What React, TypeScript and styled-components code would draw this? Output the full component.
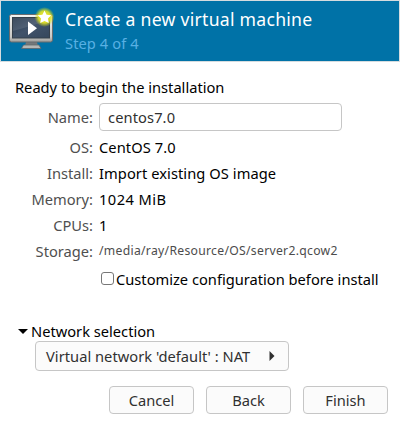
import React from "react";
import styled, { createGlobalStyle } from "styled-components";

const GlobalStyle = createGlobalStyle`
  * { box-sizing: border-box; }
  body { margin: 0; background: #fff; }
`;

const Dialog = styled.main`
  display: flex;
  flex-direction: column;
  width: 400px;
  height: 426px;
  overflow: hidden;
  background: #fff;
  color: #000;
  font: 14.667px/20px "Noto Sans", sans-serif;
  white-space: nowrap;
`;

const Header = styled.header`
  display: flex;
  height: 62px;
  padding: 6px 0 0 7px;
  gap: 9px;
  border: 1px solid #d5dcdf;
  background: #0072a7;
  flex: none;
`;

const Title = styled.h1`
  margin: 0;
  color: #fff;
  font-size: 17.6px;
  letter-spacing: 0.27px;
  font-weight: 400;
  line-height: 24px;
`;

const Step = styled.div`
  color: #58b0e3;
  letter-spacing: 0.08px;
  line-height: 24px;
`;

const Summary = styled.section`
  display: flex;
  flex-direction: column;
  gap: 6px;
  padding: 15px 0 0 15px;
`;

const Fields = styled.div`
  display: grid;
  grid-template-columns: 78px 243px;
  column-gap: 6px;
  row-gap: 6px;
  align-items: center;
`;

const Label = styled.label`
  color: #4f4f4f;
  text-align: right;
`;

const Value = styled.span<{ $small?: boolean; $tracking?: number }>`
  color: ${(p) => (p.$small ? "#4c4c4c" : "#000")};
  font-size: ${(p) => (p.$small ? "12.2px" : "inherit")};
  letter-spacing: ${(p) => p.$tracking ?? 0}px;
`;

const NameInput = styled.input`
  width: 243px;
  height: 28px;
  padding: 0 8px;
  border: 1px solid #c6c6c6;
  border-radius: 4px;
  background: #fff;
  color: #303030;
  font: inherit;
  letter-spacing: 0.1px;
  outline: none;
`;

const CheckRow = styled.label`
  display: flex;
  align-items: center;
  gap: 2px;
  margin: 8px 0 0 101px;
`;

const Checkbox = styled.input`
  appearance: none;
  width: 13px;
  height: 13px;
  margin: 0 0 2px;
  border: 1px solid #777;
  border-radius: 3px;
  background: #fff;
`;

const Expander = styled.div`
  display: flex;
  align-items: center;
  gap: 3px;
  margin: 32px 0 0 18px;
`;

const Button = styled.button`
  display: flex;
  align-items: center;
  justify-content: center;
  width: 85px;
  height: 28px;
  padding: 0;
  border: 1px solid #c6c6c6;
  border-radius: 4px;
  background: #fbfbfb;
  color: #303030;
  font: inherit;
`;

const NetworkSelect = styled(Button)`
  flex: none;
  justify-content: space-between;
  width: 254px;
  height: 30px;
  margin: 0 0 0 35px;
  padding: 0 13px 0 10px;
  letter-spacing: 0.03px;
`;

const Actions = styled.footer`
  display: flex;
  gap: 12px;
  margin: 15px 0 0 109px;
`;

function MonitorIcon() {
  return (
    <svg width="48" height="48" viewBox="0 0 48 48" aria-hidden="true">
      <defs>
        <linearGradient id="frame" x1="0" y1="0" x2="0" y2="1">
          <stop offset="0" stopColor="#f4f4f2" />
          <stop offset=".8" stopColor="#c9c9c6" />
          <stop offset="1" stopColor="#9c9c99" />
        </linearGradient>
        <linearGradient id="screen" x1="0" y1="0" x2="1" y2="1">
          <stop offset="0" stopColor="#27384c" />
          <stop offset=".5" stopColor="#41536a" />
          <stop offset="1" stopColor="#35475c" />
        </linearGradient>
        <radialGradient id="glow">
          <stop offset="0" stopColor="#f6f23b" />
          <stop offset=".6" stopColor="#e6e522" stopOpacity=".9" />
          <stop offset="1" stopColor="#c5d51d" stopOpacity="0" />
        </radialGradient>
      </defs>
      <path d="M18 35h11l1 4h-13z" fill="#73777a" />
      <path d="M15.5 38h15.5l2 3.5h-19.5z" fill="#b5b7b5" stroke="#626769" strokeWidth=".8" />
      <rect x="1.5" y="7.5" width="43" height="27.5" rx="2" fill="url(#frame)" stroke="#696c6e" />
      <rect x="4.5" y="10.5" width="37" height="20.5" fill="url(#screen)" stroke="#35404b" />
      <path d="M5 24Q20 20 41 13V11H5z" fill="#fff" opacity=".1" />
      <path d="M20 14.5v13.5l9-6.75z" fill="#fff" />
      <circle cx="36.5" cy="10" r="10" fill="url(#glow)" />
      <path d="M36.5 3.5l2.1 4.2 4.7.6-3.4 3.2.9 4.6-4.3-2.2-4.3 2.2.9-4.6-3.4-3.2 4.7-.6z" fill="#fff" />
    </svg>
  );
}

const details = [
  { label: "OS:", value: "CentOS 7.0", tracking: 0.08 },
  { label: "Install:", value: "Import existing OS image", tracking: 0.07 },
  { label: "Memory:", value: "1024 MiB", tracking: 0.45 },
  { label: "CPUs:", value: "1" },
  { label: "Storage:", value: "/media/ray/Resource/OS/server2.qcow2", small: true, tracking: 0.29 },
];

export default function App() {
  return (
    <Dialog>
      <GlobalStyle />
      <Header>
        <MonitorIcon />
        <div>
          <Title>Create a new virtual machine</Title>
          <Step>Step 4 of 4</Step>
        </div>
      </Header>
      <Summary>
        <div>Ready to begin the installation</div>
        <Fields>
          <Label htmlFor="name">Name:</Label>
          <NameInput id="name" defaultValue="centos7.0" />
          {details.map((d) => (
            <React.Fragment key={d.label}>
              <Label as="span">{d.label}</Label>
              <Value $small={d.small} $tracking={d.tracking}>{d.value}</Value>
            </React.Fragment>
          ))}
        </Fields>
      </Summary>
      <CheckRow>
        <Checkbox type="checkbox" />
        Customize configuration before install
      </CheckRow>
      <Expander>
        <svg width="10" height="6" viewBox="0 0 10 6" aria-hidden="true">
          <path d="M0 1h10L5 6z" fill="#000" />
        </svg>
        Network selection
      </Expander>
      <NetworkSelect>
        Virtual network 'default' : NAT
        <svg width="6" height="10" viewBox="0 0 6 10" aria-hidden="true">
          <path d="M.5 0v10l5-5z" fill="#303030" />
        </svg>
      </NetworkSelect>
      <Actions>
        <Button>Cancel</Button>
        <Button>Back</Button>
        <Button>Finish</Button>
      </Actions>
    </Dialog>
  );
}
